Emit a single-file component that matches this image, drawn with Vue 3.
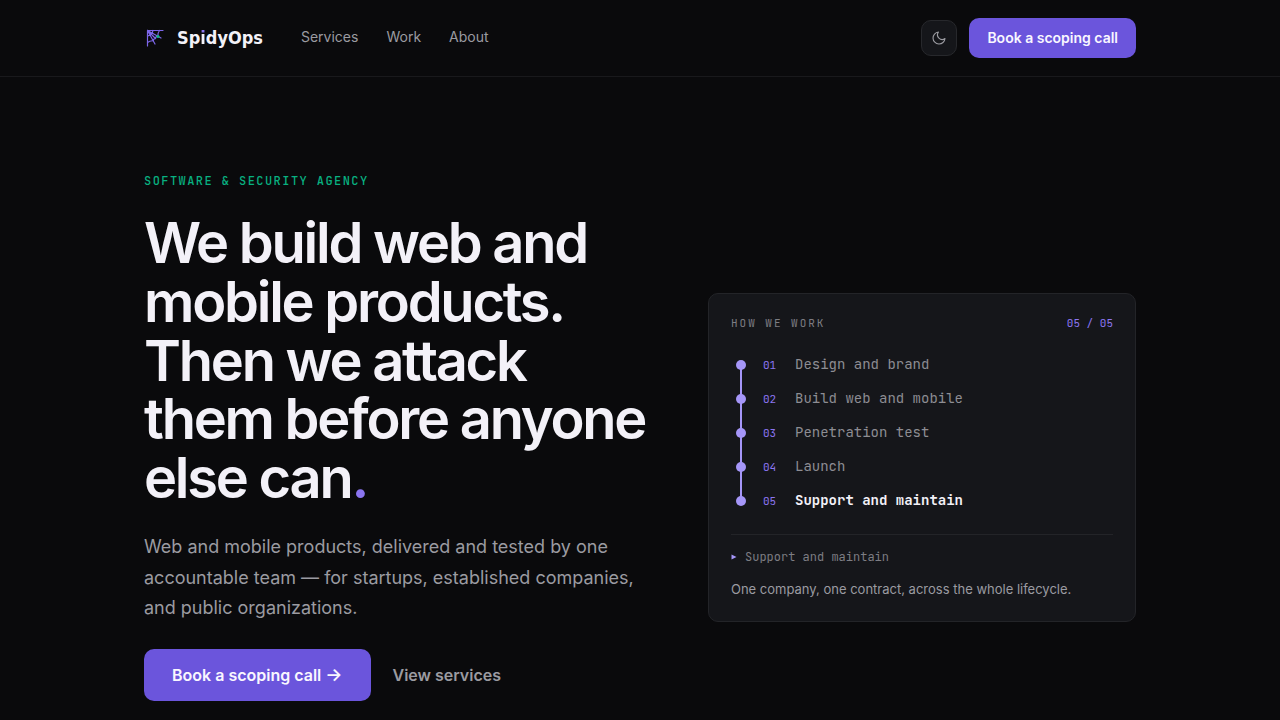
<template>
  <div class="page">
    <header class="header">
      <div class="container header-inner">
        <a href="#" class="brand">
          <svg class="brand-mark" viewBox="-2 -1 20 20" fill="none" stroke="#7c66e8" stroke-width="1.200" stroke-linecap="round">
            <path d="M1.500 1.500H17M1.500 1.500V17M1.500 1.500L9.500 9.500M1.500 1.500L15 9M1.500 1.500L9 15" />
            <path d="M7 1.500Q6.200 3 6.500 4.200Q5.300 4.500 5 5.200Q4.500 5.500 4.200 6.500Q3 6.200 1.500 7" />
            <path d="M13.500 1.500Q11.500 4 11.800 7.200Q9.500 7.500 9.500 9.500Q7.500 9.500 7.200 11.800Q4 11.500 1.500 13.500" />
            <circle cx="12" cy="7.500" r="1.500" fill="#10b981" stroke="none" />
          </svg>
          <span class="brand-name">Sp<span class="brand-i">i</span>dyOps</span>
        </a>
        <nav class="nav">
          <a v-for="link in links" :key="link" href="#" class="nav-link">{{ link }}</a>
        </nav>
        <div class="header-actions">
          <button
            class="theme-btn"
            type="button"
            aria-label="Toggle theme"
            @click="dark = !dark"
          >
            <svg viewBox="0 0 24 24" fill="none" stroke="currentColor" stroke-width="1.700" stroke-linecap="round" stroke-linejoin="round">
              <path d="M21 12.790A9 9 0 1 1 11.210 3 7 7 0 0 0 21 12.790z" />
            </svg>
          </button>
          <a href="#" class="btn btn-small">Book a scoping call</a>
        </div>
      </div>
    </header>

    <main class="container hero">
      <section class="hero-copy">
        <p class="eyebrow">Software &amp; security agency</p>
        <h1 class="title">
          We build web and mobile products. Then we attack them before anyone else can<span class="dot">.</span>
        </h1>
        <p class="lead">
          Web and mobile products, delivered and tested by one accountable team — for startups,
          established companies, and public organizations.
        </p>
        <div class="hero-actions">
          <a href="#" class="btn btn-large">Book a scoping call <span class="arrow">→</span></a>
          <a href="#" class="link-secondary">View services</a>
        </div>
      </section>

      <aside class="card">
        <div class="card-head">
          <span class="card-label">How we work</span>
          <span class="card-count">{{ pad(active + 1) }} / {{ pad(steps.length) }}</span>
        </div>
        <ol class="steps">
          <li
            v-for="(step, i) in steps"
            :key="step.title"
            class="step"
            :class="{ active: i === active }"
            @mouseenter="active = i"
          >
            <span class="step-node"></span>
            <span class="step-num">{{ pad(i + 1) }}</span>
            <span class="step-title">{{ step.title }}</span>
          </li>
        </ol>
        <div class="card-detail">
          <p class="detail-title">
            <svg class="caret" viewBox="0 0 6 6"><path d="M0.500 0.500L5.500 3L0.500 5.500z" fill="#a596f8" /></svg>
            {{ steps[active].title }}
          </p>
          <p class="detail-text">{{ steps[active].text }}</p>
        </div>
      </aside>
    </main>
  </div>
</template>

<script setup>
import { ref } from 'vue'

const links = ['Services', 'Work', 'About']

const steps = [
  { title: 'Design and brand', text: 'Identity and interface, designed together.' },
  { title: 'Build web and mobile', text: 'One team for every platform.' },
  { title: 'Penetration test', text: 'We attack it before anyone else can.' },
  { title: 'Launch', text: 'Shipped, monitored and hardened.' },
  { title: 'Support and maintain', text: 'One company, one contract, across the whole lifecycle.' }
]

const active = ref(4)
const dark = ref(true)

const pad = (n) => String(n).padStart(2, '0')
</script>

<style>
body {
  margin: 0;
  background: #0a0a0c;
}
</style>

<style scoped>
.page {
  min-height: 100vh;
  background: #0a0a0c;
  color: #f3f1f8;
  font-family: Inter, "Liberation Sans", sans-serif;
}

.page * {
  box-sizing: border-box;
}

a {
  color: inherit;
  text-decoration: none;
}

p,
h1,
ol {
  margin: 0;
  padding: 0;
}

.container {
  max-width: 1040px;
  margin: 0 auto;
  padding: 0 24px;
}

.header {
  border-bottom: 1px solid #19191c;
}

.header-inner {
  display: flex;
  align-items: center;
  height: 76px;
}

.brand {
  display: flex;
  align-items: center;
  gap: 13px;
}

.brand-mark {
  width: 20px;
  height: 20px;
}

.brand-name {
  font-family: "DejaVu Sans Condensed", "DejaVu Sans", sans-serif;
  font-size: 18px;
  line-height: 24px;
  font-weight: 700;
}

.brand-i {
  background: linear-gradient(#8b75f0 7px, #f3f1f8 7px);
  background-clip: text;
  color: transparent;
}

.nav {
  display: flex;
  gap: 28px;
  margin-left: 38px;
  padding-bottom: 3px;
}

.nav-link {
  font-size: 14px;
  line-height: 20px;
  color: #9b9ba1;
}

.header-actions {
  display: flex;
  align-items: center;
  gap: 12px;
  margin-left: auto;
}

.theme-btn {
  display: grid;
  place-items: center;
  width: 36px;
  height: 36px;
  padding: 0;
  border: 1px solid #27282c;
  border-radius: 10px;
  background: #15161a;
  color: #9b9ba1;
}

.theme-btn svg {
  width: 16px;
  height: 16px;
}

.btn {
  border-radius: 10px;
  background: #6b55dc;
  color: #f9f7ff;
  font-weight: 600;
  white-space: nowrap;
}

.btn-small {
  padding: 10px 18px;
  font-size: 14px;
  line-height: 20px;
}

.btn-large {
  padding: 14px 28px;
  font-size: 16px;
  line-height: 24px;
}

.arrow {
  font-size: 18px;
  line-height: 20px;
}

.hero {
  display: grid;
  grid-template-columns: minmax(0, 1fr) 428px;
  gap: 48px;
  align-items: start;
  padding-top: 96px;
  padding-bottom: 16px;
}

.eyebrow {
  font-family: "JetBrains Mono", "DejaVu Sans Mono", monospace;
  font-size: 12px;
  line-height: 16px;
  font-weight: 500;
  letter-spacing: 0.12em;
  text-transform: uppercase;
  color: #08b080;
}

.title {
  margin-top: 25px;
  font-size: 56px;
  line-height: 1.05;
  font-weight: 600;
  letter-spacing: -0.04em;
}

.dot {
  color: #8b75f0;
}

.lead {
  max-width: 500px;
  margin-top: 24px;
  font-size: 18px;
  line-height: 1.7;
  color: #9b9ba1;
}

.hero-actions {
  display: flex;
  align-items: center;
  gap: 22px;
  margin-top: 25px;
}

.link-secondary {
  font-size: 16px;
  line-height: 24px;
  font-weight: 600;
  color: #9b9ba1;
}

.card {
  margin-top: 120px;
  padding: 22px;
  border: 1px solid #232428;
  border-radius: 10px;
  background: #15161a;
  font-family: "JetBrains Mono", "DejaVu Sans Mono", monospace;
}

.card-head {
  display: flex;
  justify-content: space-between;
  font-size: 11px;
  line-height: 14px;
}

.card-label {
  letter-spacing: 0.18em;
  text-transform: uppercase;
  color: #7d7d83;
}

.card-count,
.step-num {
  color: #8b75f0;
}

.steps {
  margin-top: 18px;
  list-style: none;
}

.step {
  position: relative;
  display: flex;
  align-items: center;
  height: 34px;
  padding-left: 5px;
}

.step-node {
  width: 10px;
  height: 10px;
  border-radius: 50%;
  background: #a596f8;
}

/* line down to the next node */
.step:not(:last-child)::after {
  content: "";
  position: absolute;
  left: 9px;
  top: 17px;
  width: 2px;
  height: 34px;
  background: #a596f8;
}

.step-num {
  width: 32px;
  margin-left: 17px;
  font-size: 11px;
}

.step-title {
  padding-bottom: 2px;
  font-size: 14px;
  line-height: 20px;
  color: #8d8d93;
}

.step.active .step-title {
  font-weight: 600;
  color: #f3f1f8;
}

.card-detail {
  margin-top: 16px;
  padding-top: 12px;
  border-top: 1px solid #232428;
}

.detail-title {
  display: flex;
  align-items: center;
  gap: 8px;
  font-size: 12px;
  line-height: 20px;
  color: #7d7d83;
}

.caret {
  width: 6px;
  height: 6px;
}

.detail-text {
  margin-top: 12px;
  font-family: Inter, "Liberation Sans", sans-serif;
  font-size: 13px;
  line-height: 20px;
  color: #9b9ba1;
}

@media (max-width: 900px) {
  .hero {
    grid-template-columns: minmax(0, 1fr);
  }

  .card {
    margin-top: 0;
  }
}
</style>
